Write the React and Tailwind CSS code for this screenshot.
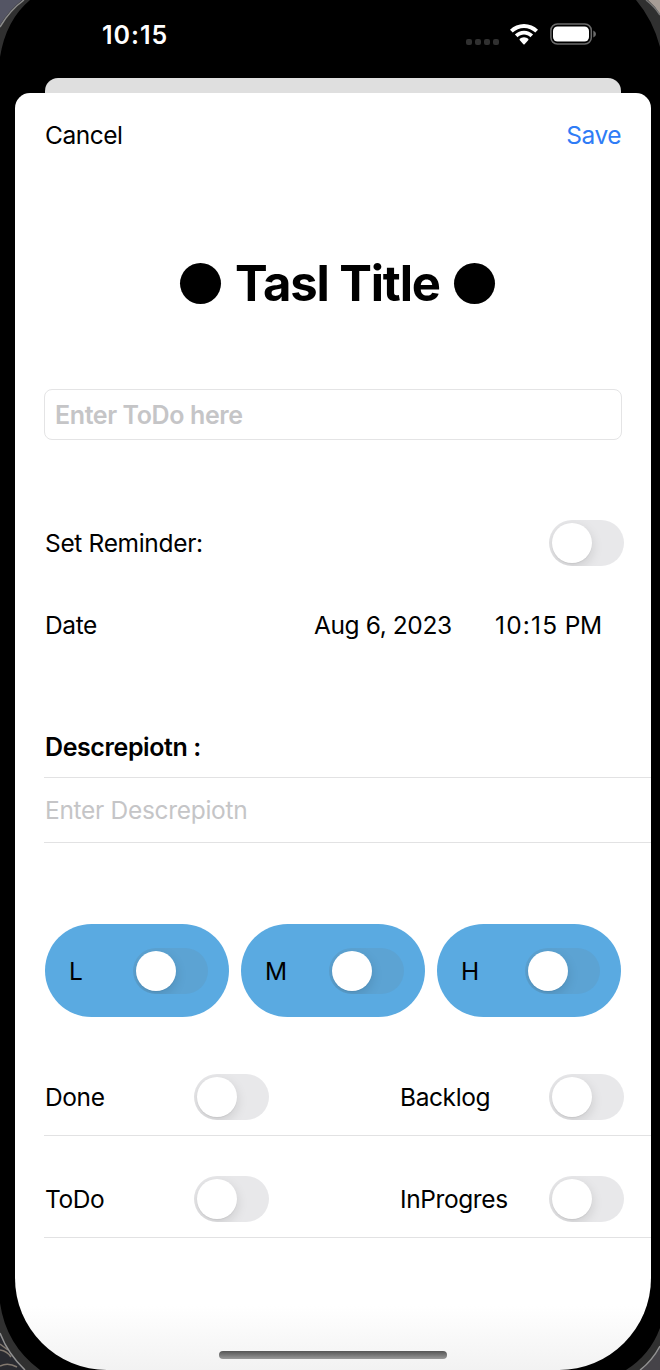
import React from "react";

function Toggle({ tinted = false }) {
  return (
    <button
      role="switch"
      aria-checked="false"
      className={
        "flex h-[46px] w-[75px] shrink-0 items-center overflow-hidden rounded-full pl-[3px] " +
        (tinted ? "bg-[#5ca3d3]" : "bg-[#e8e8ea]")
      }
    >
      <span className="h-10 w-10 rounded-full bg-white shadow-[0_4px_12px_rgba(0,0,0,0.13),0_1px_1px_rgba(0,0,0,0.05)]" />
    </button>
  );
}

function Priority({ label }) {
  return (
    <div className="flex h-[93px] w-[184px] items-center justify-between rounded-full bg-[#5aaae1] pl-6 pr-[21px]">
      <span>{label}</span>
      <Toggle tinted />
    </div>
  );
}

function StatusRow({ left, right }) {
  return (
    <div className="-ml-px flex h-[78px] items-center border-b border-[#e2e2e3] pr-[27px] pl-px">
      <span className="w-[149px]">{left}</span>
      <Toggle />
      <span className="ml-[131px] flex-1">{right}</span>
      <Toggle />
    </div>
  );
}

function StatusBar() {
  return (
    <div className="flex h-[78px] items-start justify-between pl-[102px] pr-[63px] text-white">
      <span className="mt-[19px] text-[25px] leading-[32px] font-semibold tracking-[1px]">10:15</span>
      <div className="mt-[22px] flex items-center">
        <div className="mt-[16px] mr-[11px] flex gap-[3px]">
          <i className="h-1.5 w-1.5 rounded-xs bg-[#303030]" />
          <i className="h-1.5 w-1.5 rounded-xs bg-[#303030]" />
          <i className="h-1.5 w-1.5 rounded-xs bg-[#303030]" />
          <i className="h-1.5 w-1.5 rounded-xs bg-[#303030]" />
        </div>
        <svg width="28" height="21" viewBox="0 0 28 21" fill="white" className="mt-0.5 mr-3">
          <path d="M14 0C8.700 0 3.600 2.100 0 5.800L2.700 8.600C5.700 5.600 9.700 3.900 14 3.900S22.300 5.600 25.300 8.600L28 5.800C24.400 2.100 19.300 0 14 0Z" />
          <path d="M14 6.700C10.600 6.700 7.300 8 4.900 10.500L7.600 13.200C9.300 11.500 11.600 10.500 14 10.500S18.700 11.500 20.400 13.200L23.100 10.500C20.700 8 17.400 6.700 14 6.700Z" />
          <path d="M14 13.200C12.300 13.200 10.800 13.900 9.600 15.100L9.600 16.100L13.400 20.300Q14 20.900 14.600 20.300L18.400 16.100L18.400 15.100C17.200 13.900 15.700 13.200 14 13.200Z" />
        </svg>
        <svg width="47" height="22" viewBox="0 0 47 22" className="mt-px">
          <rect x="0.9" y="1" width="40.400" height="20" rx="6.500" fill="none" stroke="#6b6b6b" strokeWidth="1.500" />
          <rect x="3" y="3.400" width="36" height="15.200" rx="4.500" fill="white" />
          <path d="M43.300 7.500Q46 8.500 46 11T43.300 14.500Z" fill="#6b6b6b" />
        </svg>
      </div>
    </div>
  );
}

function Bezel() {
  return (
    <svg className="pointer-events-none absolute inset-0" width="660" height="1370" viewBox="0 0 660 1370">
      <path d="M0 0H30Q6 20 0 57Z" fill="#303030" />
      <path d="M0 0H22Q9 10 0 25Z" fill="#545564" />
      <path d="M24 0Q10 10 0 27" fill="none" stroke="#8c8c8c" strokeWidth="1.500" />
      <path d="M636 0H660V47Q653 20 636 0Z" fill="#303030" />
      <path d="M648 0H660V14Q655 6 648 0Z" fill="#a79d96" />
      <path d="M646 0Q655 7 660 15" fill="none" stroke="#777" strokeWidth="1.500" />
      <path d="M0 1303Q6 1345 40 1370H0Z" fill="#303030" />
      <path d="M0 1333Q8 1354 25 1370H0Z" fill="#292a30" />
      <path d="M0 1344Q4 1347 8 1350M0 1350Q7 1351 11 1357M0 1366Q8 1362 17 1367" fill="none" stroke="#83796f" strokeWidth="1.500" />
      <path d="M0 1333Q8 1354 25 1370" fill="none" stroke="#929292" strokeWidth="1.500" />
      <path d="M660 1328Q650 1355 626 1370H660Z" fill="#303030" />
      <path d="M660 1346Q652 1361 640 1370H660Z" fill="#454348" />
      <path d="M660 1346Q652 1361 640 1370" fill="none" stroke="#929292" strokeWidth="1.500" />
    </svg>
  );
}

export default function App() {
  return (
    <div className="relative flex h-[1370px] w-[660px] flex-col overflow-hidden bg-black font-['Inter',sans-serif] text-[24.5px] leading-[32px] tracking-[-0.4px] text-black">
      <StatusBar />
      <div className="mr-[39px] ml-[45px] h-[15px] shrink-0 rounded-t-[13px] bg-[#dfdfdf]" />
      <main className="mr-[9px] ml-[15px] flex flex-1 flex-col rounded-t-[15px] rounded-b-[92px] bg-linear-to-b from-white from-95% to-[#f2f2f2] pl-[30px]">
        <header className="flex h-[84px] items-center justify-between pr-[30px]">
          <button className="tracking-[-0.5px]">Cancel</button>
          <button className="tracking-[-0.5px] text-[#2f7cf6]">Save</button>
        </header>
        <div className="flex h-[212px] items-center pl-[135px]">
          <span className="h-[41px] w-[41px] rounded-full bg-black" />
          <h1 className="mt-0.5 mr-[16px] ml-[14px] w-[203px] text-[49px] leading-[56px] font-bold tracking-[-1.15px] whitespace-nowrap">Tasl Title</h1>
          <span className="h-[41px] w-[41px] rounded-full bg-black" />
        </div>
        <div className="mr-[29px] -ml-px flex h-[51px] items-center rounded-[8px] border border-[#e4e4e5] pl-2.5 text-[25px] font-semibold tracking-[-0.4px] text-[#c5c5c7]">
          Enter ToDo here
        </div>
        <div className="mt-20 flex h-[46px] items-center justify-between pr-[27px]">
          <span className="tracking-[-0.33px]">Set Reminder:</span>
          <Toggle />
        </div>
        <div className="flex h-[118px] items-center">
          <span className="w-[269px]">Date</span>
          <span className="w-[181px]">Aug 6, 2023</span>
          <span>
            <span className="tracking-[1.2px]">10:15</span> PM
          </span>
        </div>
        <div className="mt-[33px] flex h-[60px] items-center text-[25px] font-semibold">Descrepiotn :</div>
        <div className="-ml-px flex h-[66px] items-center border-y border-[#e2e2e3] pb-px pl-px tracking-[-0.3px] text-[#c5c5c7]">
          Enter Descrepiotn
        </div>
        <div className="mt-[81px] flex gap-3">
          <Priority label="L" />
          <Priority label="M" />
          <Priority label="H" />
        </div>
        <div className="mt-[41px] flex flex-col gap-6">
          <StatusRow left="Done" right="Backlog" />
          <StatusRow left="ToDo" right="InProgres" />
        </div>
        <div className="mt-auto mb-[11.5px] ml-[174px] h-2 w-[228px] rounded-full bg-linear-to-b from-[#555] to-[#999]" />
      </main>
      <Bezel />
    </div>
  );
}
